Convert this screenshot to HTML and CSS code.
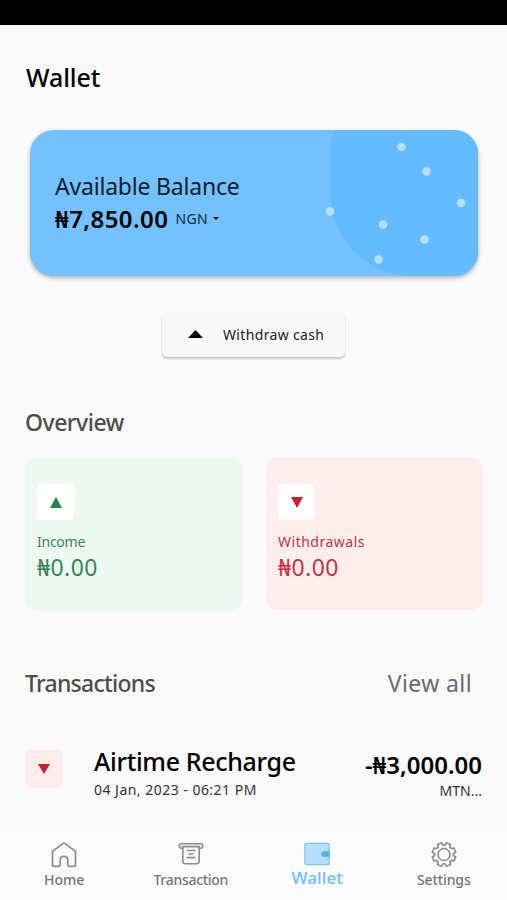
FILE: index.html
```
<!DOCTYPE html>
<html lang="en">
<head>
<meta charset="utf-8">
<title>Wallet</title>
<link rel="stylesheet" href="styles.css">
</head>
<body>
<div class="status-bar"></div>
<main class="content">
  <h1 class="title">Wallet</h1>

  <section class="balance">
    <svg class="balance-art" viewBox="0 0 448 146" aria-hidden="true">
      <path fill="#64bbff" d="M304 0Q301 6 301 16V66C301 108 335 142 376 146H448V0Z"/>
      <g fill="#b3e1ff">
        <circle cx="371.5" cy="17" r="4.3"/><circle cx="396.5" cy="41.5" r="4.3"/>
        <circle cx="431" cy="73" r="4.3"/><circle cx="300" cy="81.5" r="4.3"/>
        <circle cx="353" cy="94.5" r="4.3"/><circle cx="394.5" cy="109.5" r="4.3"/>
        <circle cx="348.5" cy="129.5" r="4.3"/>
      </g>
    </svg>
    <div class="balance-text">
      <div class="balance-label">Available Balance</div>
      <div class="balance-row">
        <span class="balance-amount">₦7,850.00</span>
        <span class="currency">NGN</span>
        <svg class="caret" width="6" height="3" viewBox="0 0 6 3"><path d="M0 0H6L3 3Z"/></svg>
      </div>
    </div>
  </section>

  <button class="withdraw">
    <svg width="15" height="8" viewBox="0 0 15 8"><path d="M0 8L7.5 0L15 8Z"/></svg>
    <span>Withdraw cash</span>
  </button>

  <h2 class="heading overview">Overview</h2>
  <section class="stats">
    <div class="stat income">
      <div class="tile"><svg width="12" height="11" viewBox="0 0 12 11"><path fill="#2e8049" d="M0 11L6 0L12 11Z"/></svg></div>
      <div class="stat-label">Income</div>
      <div class="stat-value">₦0.00</div>
    </div>
    <div class="stat withdrawals">
      <div class="tile"><svg width="12" height="11" viewBox="0 0 12 11"><path fill="#c8202b" d="M0 0H12L6 11Z"/></svg></div>
      <div class="stat-label">Withdrawals</div>
      <div class="stat-value">₦0.00</div>
    </div>
  </section>

  <div class="transactions-head">
    <h2 class="heading transactions">Transactions</h2>
    <a class="view-all">View all</a>
  </div>
  <div class="transaction">
    <div class="tile tile-red"><svg width="12" height="10" viewBox="0 0 12 10"><path fill="#c8202b" d="M0 0H12L6 10Z"/></svg></div>
    <div class="details">
      <div class="name">Airtime Recharge</div>
      <div class="date">04 Jan, 2023 - 06:21 PM</div>
    </div>
    <div class="figures">
      <div class="amount">-₦3,000.00</div>
      <div class="provider">MTN...</div>
    </div>
  </div>
</main>

<nav class="nav">
  <a class="nav-item home">
    <svg width="26" height="26" viewBox="0 0 26 26" fill="none" stroke="#8c8c8c" stroke-width="1.7" stroke-linejoin="round"><path d="M1.5 10.6Q1.5 9.6 2.3 8.9L11.7 1.7Q13 .8 14.3 1.7L23.7 8.9Q24.5 9.6 24.5 10.6V22.5Q24.5 24.3 22.7 24.3H18.3Q16.8 24.3 16.8 22.8V18Q16.8 14.3 13 14.3T9.2 18V22.8Q9.2 24.3 7.7 24.3H3.3Q1.5 24.3 1.5 22.5Z"/></svg>
    <span>Home</span>
  </a>
  <a class="nav-item transaction-tab">
    <svg width="26" height="26" viewBox="0 0 26 26" fill="none" stroke="#8c8c8c" stroke-width="1.6" stroke-linecap="round" stroke-linejoin="round"><path d="M4.8 6.2H3.4Q1.2 6.2 1.2 4T3.6 1.8H22.4Q24.8 1.8 24.8 4T22.6 6.2H21.2M4.8 4.6V18.8Q4.8 21.8 7.8 21.8H18.2Q21.2 21.8 21.2 18.8V4.6M4.8 4.6H21.2M9.2 8.5H16.8M11 12H15M9.2 15.6H16.8"/></svg>
    <span>Transaction</span>
  </a>
  <a class="nav-item active">
    <svg width="26" height="26" viewBox="0 0 26 26"><rect x=".8" y="1.3" width="24.4" height="21.4" rx="2" fill="#b9dfff" stroke="#7cc4fb" stroke-width="1.2"/><path fill="#4cb0fb" d="M25.4 9.2H19.5Q17.4 9.2 17.4 12T19.5 14.8H25.4Z"/></svg>
    <span>Wallet</span>
  </a>
  <a class="nav-item settings">
    <svg width="26" height="26" viewBox="0 0 26 26" fill="none" stroke="#8c8c8c" stroke-width="1.6" stroke-linejoin="round"><circle cx="13" cy="12.5" r="6"/><path id="gear"/></svg>
    <span>Settings</span>
  </a>
</nav>
<script src="gear.js"></script>
</body>
</html>
```
FILE: gear.js
```
// Builds the eight-toothed outline of the settings icon.
const teeth = 8, cx = 13, cy = 12.5;
const profile = [[-0.29, 9.3], [-0.19, 11.9], [0.19, 11.9], [0.29, 9.3]];
const points = [];
for (let i = 0; i < teeth; i++) {
  const mid = (i + 0.5) * 2 * Math.PI / teeth;
  for (const [offset, r] of profile) {
    points.push((cx + r * Math.cos(mid + offset)).toFixed(2) + ' ' + (cy + r * Math.sin(mid + offset)).toFixed(2));
  }
}
document.getElementById('gear').setAttribute('d', 'M' + points.join('L') + 'Z');
```
FILE: styles.css
```
* { box-sizing: border-box; }
body {
  margin: 0;
  height: 900px;
  display: flex;
  flex-direction: column;
  overflow: hidden;
  background: #fafafa;
  color: #000;
  font-family: "Noto Sans", sans-serif;
}
svg { display: block; flex: none; }
.status-bar { height: 25px; background: #000; flex: none; }
.content { flex: 1; min-height: 0; padding: 36px 25px 0; display: flex; flex-direction: column; }
.title { margin: 0 0 0 1px; font-size: 25px; line-height: 32px; font-weight: 500; letter-spacing: -.1px; }

.balance {
  position: relative;
  height: 146px;
  flex: none;
  margin: 37px 4px 0 5px;
  border-radius: 24px;
  background: #73c1ff;
  overflow: hidden;
  box-shadow: 0 2px 4px rgba(0, 0, 0, .3);
}
.balance-art { position: absolute; inset: 0; width: 100%; height: 100%; }
.balance-text { position: relative; padding: 40px 0 0 25px; }
.balance-label { font-size: 23px; line-height: 32px; letter-spacing: -.2px; color: #0b1d2b; }
.balance-row { display: flex; align-items: center; height: 32px; }
.balance-amount { font-size: 24px; font-weight: 600; letter-spacing: .45px; }
.currency { margin-left: 7px; font-size: 14px; letter-spacing: .3px; color: #12283a; }
.caret { margin-left: 5px; }

.withdraw {
  align-self: center;
  flex: none;
  width: 183px;
  height: 43px;
  margin: 38px 0 0;
  padding: 0 0 3px 26px;
  border: 0;
  border-radius: 5px;
  display: flex;
  align-items: center;
  gap: 20px;
  background: #f8f8f8;
  box-shadow: 0 2px 2px rgba(0, 0, 0, .2), 0 0 2px rgba(0, 0, 0, .06);
  font: 14px "Noto Sans", sans-serif;
  letter-spacing: .34px;
  color: #222;
  white-space: nowrap;
}

.heading { margin: 0; font-size: 23px; line-height: 32px; font-weight: 500; color: #4d4d4d; }
.overview { margin-top: 49px; letter-spacing: -.5px; }
.stats { display: grid; grid-template-columns: 218px 217px; gap: 23px; margin-top: 19px; flex: none; align-items: start; }
.stat { height: 154px; padding: 27px 12px 0; border-radius: 13px; }
.income { background: #eefaf1; color: #39845a; }
.withdrawals { height: 153px; background: #fceeed; color: #c63340; }
.tile { width: 37px; height: 36px; border-radius: 5px; background: #fff; display: flex; align-items: center; justify-content: center; }
.stat-label { margin-top: 12px; font-size: 14px; line-height: 20px; letter-spacing: -.25px; }
.withdrawals .stat-label { letter-spacing: .5px; }
.stat-value { font-size: 23px; line-height: 30px; letter-spacing: .4px; }

.transactions-head { display: flex; justify-content: space-between; margin-top: 56px; padding-right: 10px; }
.transactions { letter-spacing: -.75px; }
.view-all { font-size: 23px; line-height: 32px; letter-spacing: .4px; color: #6b6b6b; }
.transaction { display: flex; align-items: flex-start; margin-top: 45px; }
.tile-red { width: 38px; height: 38px; margin-top: 6px; background: #fdeeed; }
.details { margin-left: 31px; flex: 1; white-space: nowrap; }
.name { font-size: 25px; line-height: 34px; font-weight: 500; letter-spacing: -.34px; }
.date { font-size: 14px; line-height: 20px; margin-top: 2px; letter-spacing: .48px; color: #333; }
.figures { text-align: right; }
.amount { font-size: 24px; line-height: 34px; font-weight: 600; margin-top: 4px; }
.provider { font-size: 14px; line-height: 18px; color: #333; }

.nav {
  height: 72px;
  flex: none;
  display: grid;
  grid-template-columns: repeat(4, 1fr);
  padding: 14px 0 0 1px;
  background: #fbfbfb;
  box-shadow: 0 0 3px rgba(0, 0, 0, .025);
}
.nav-item { display: flex; flex-direction: column; align-items: center; font-size: 14px; line-height: 20px; font-weight: 500; color: #757575; }
.nav-item span { margin-top: 2px; }
.transaction-tab { letter-spacing: -.28px; }
.settings { letter-spacing: -.1px; }
.active { font-size: 17px; letter-spacing: .1px; color: #6bc0fd; }
.active span { margin-top: 0; }
```
